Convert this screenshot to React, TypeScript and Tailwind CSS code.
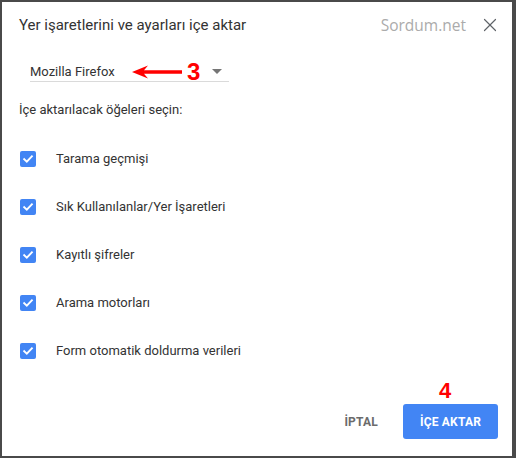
import { X } from "lucide-react";

const items = [
  "Tarama geçmişi",
  "Sık Kullanılanlar/Yer İşaretleri",
  "Kayıtlı şifreler",
  "Arama motorları",
  "Form otomatik doldurma verileri",
];

function CheckBox() {
  return (
    <div className="w-4 h-4 rounded-[2px] bg-[#4285f4] flex items-center justify-center shrink-0">
      <svg width="12" height="12" viewBox="0 0 12 12" fill="none">
        <path d="M2.2 6.2 L4.8 8.7 L9.9 3.4" stroke="white" strokeWidth="1.9" strokeLinecap="square" />
      </svg>
    </div>
  );
}

export default function App() {
  return (
    <div className="w-[516px] h-[458px] bg-[#4a4a4a] pt-[2px] pl-[2px]" style={{ fontFamily: "Roboto, 'Liberation Sans', sans-serif" }}>
      <div className="w-[510px] h-[454px] bg-white flex flex-col">
        {/* header */}
        <div className="h-[46px] flex items-center pl-[17px] pr-[11px]">
          <h1 className="text-[15px] leading-5 text-[#333333] flex-1">Yer işaretlerini ve ayarları içe aktar</h1>
          <span className="text-[15.5px] leading-5 text-[#ababab] mr-[13px]" style={{ fontFamily: "'Open Sans', sans-serif" }}>Sordum.net</span>
          <X className="w-[22px] h-[22px] text-[#5f6368]" strokeWidth={1.3} />
        </div>

        {/* browser select */}
        <div className="relative mt-[11px] ml-[28px] w-[199px] h-[23px] border-b border-[#dadada] flex items-end pb-[1px]">
          <span className="text-[13px] leading-4 text-[#333333] flex-1">Mozilla Firefox</span>
          <svg width="10" height="5" viewBox="0 0 10 5" className="mr-[7px] mb-[6px]">
            <path d="M0 0 L10 0 L5 5 Z" fill="#757575" />
          </svg>
          <svg className="absolute left-[101px] top-[5px]" width="52" height="16" viewBox="0 0 52 16">
            <path d="M1 8 L17 1.5 L13 6.3 L51 6.3 L51 9.7 L13 9.7 L17 14.5 Z" fill="#ff0000" />
          </svg>
          <span className="absolute left-[157px] -top-[1px] text-[24px] leading-7 font-bold text-[#ff0000]" style={{ fontFamily: "'Liberation Sans', Arial, sans-serif" }}>3</span>
        </div>

        <p className="mt-[20px] ml-[17px] text-[13px] leading-4 text-[#333333]">İçe aktarılacak öğeleri seçin:</p>

        {/* options */}
        <div className="mt-[17px] flex flex-col">
          {items.map((label) => (
            <div key={label} className="h-12 flex items-center pl-[18px] gap-5">
              <CheckBox />
              <span className="text-[13px] leading-4 text-[#333333]">{label}</span>
            </div>
          ))}
        </div>

        {/* footer */}
        <div className="mt-[29px] flex items-center justify-end pr-[14px] gap-[25px]">
          <button className="text-[12px] font-bold text-[#6b6b6b] tracking-[0.2px]">İPTAL</button>
          <div className="relative">
            <span className="absolute left-[36px] -top-[25px] text-[22px] leading-6 font-bold text-[#ff0000]" style={{ fontFamily: "'Liberation Sans', Arial, sans-serif" }}>4</span>
            <button className="w-[95px] h-[35px] rounded-[3px] bg-[#4285f4] text-white text-[12px] font-bold tracking-[0.2px]">İÇE AKTAR</button>
          </div>
        </div>
      </div>
    </div>
  );
}
